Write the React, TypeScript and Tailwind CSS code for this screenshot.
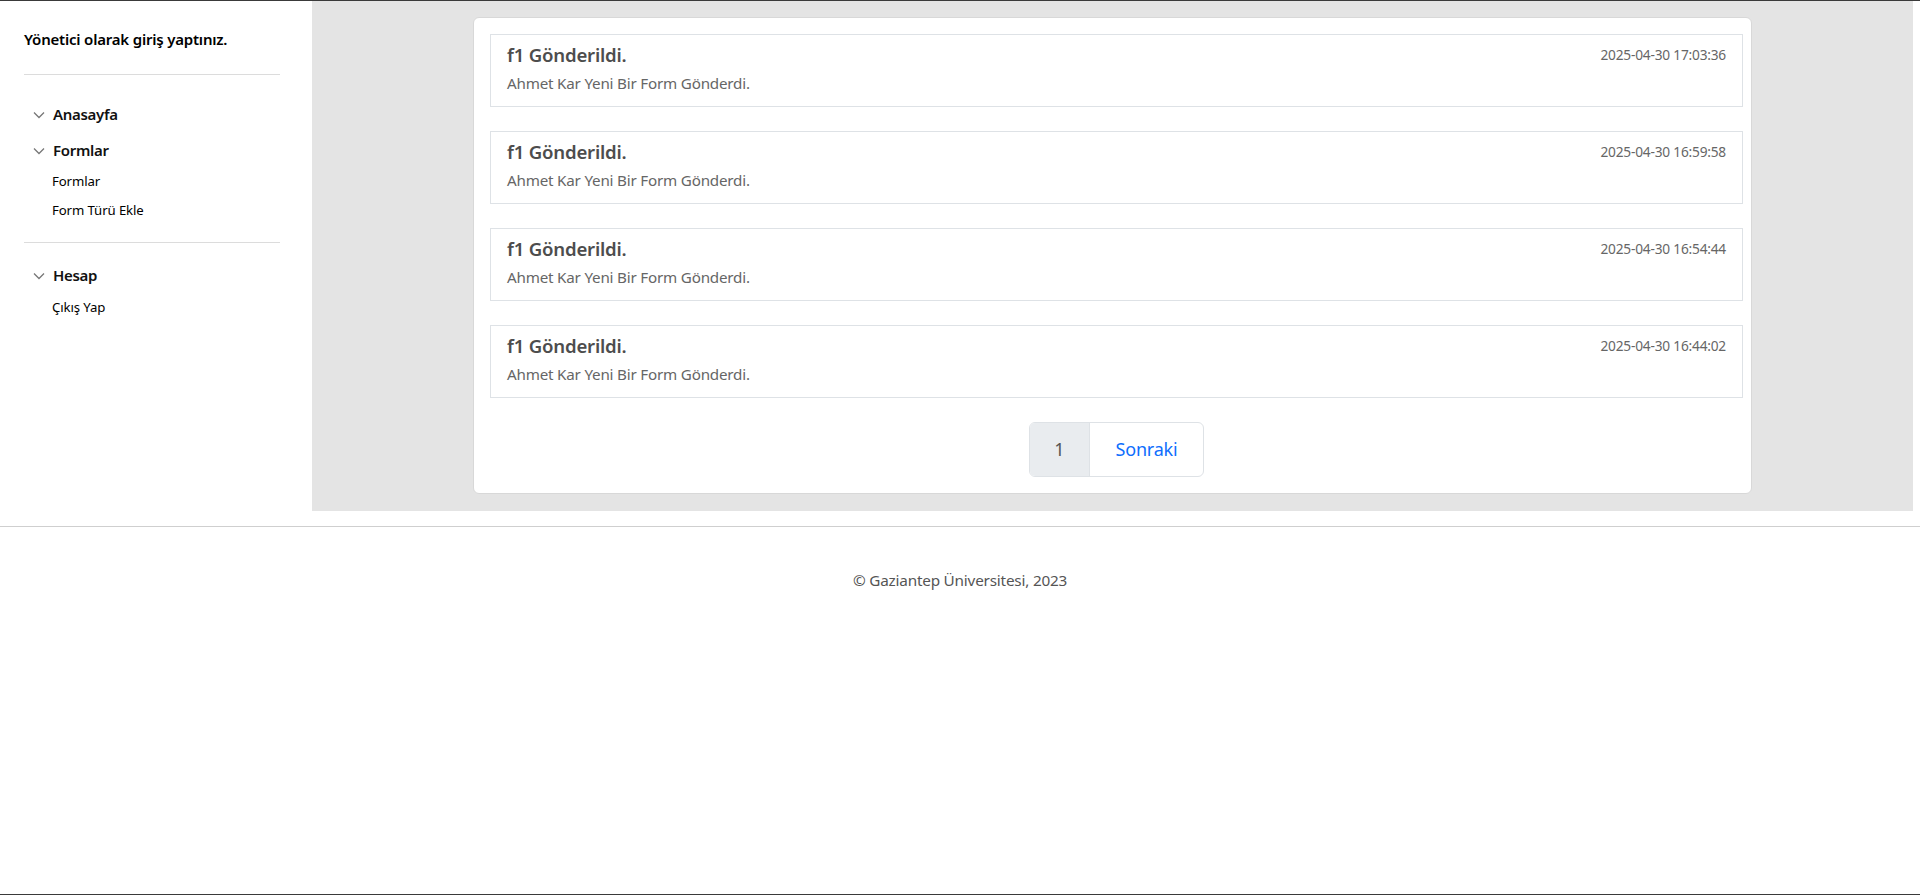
import React from "react";

const items = [
  "2025-04-30 17:03:36",
  "2025-04-30 16:59:58",
  "2025-04-30 16:54:44",
  "2025-04-30 16:44:02",
];

function Chevron() {
  return (
    <svg width="12" height="8" viewBox="0 0 12 8" className="shrink-0">
      <path d="M1 1.5 L6 6.5 L11 1.5" fill="none" stroke="#777" strokeWidth="1.3" />
    </svg>
  );
}

export default function App() {
  return (
    <div
      className="h-[895px] w-full border-t border-b border-[#3a3a3a] bg-white flex flex-col"
      style={{ fontFamily: '"Noto Sans", "Open Sans", sans-serif' }}
    >
      <div className="flex">
        <aside className="w-[312px] shrink-0 px-6 pt-[27px]">
          <div className="text-[15px] font-semibold text-black tracking-[-0.2px]">Yönetici olarak giriş yaptınız.</div>
          <div className="mt-[23px] h-px bg-[#dcdcdc] w-[256px]" />
          <div className="pt-[29px]">
            <div className="flex items-center gap-[8px] pl-[9px] h-[22px]">
              <Chevron />
              <span className="text-[15px] font-semibold text-[#111] tracking-[-0.3px]">Anasayfa</span>
            </div>
            <div className="flex items-center gap-[8px] pl-[9px] h-[22px] mt-[14px]">
              <Chevron />
              <span className="text-[15px] font-semibold text-[#111] tracking-[-0.3px]">Formlar</span>
            </div>
            <div className="pl-[28px] mt-[10px] text-[13.2px] text-black leading-[18px] tracking-[-0.1px]">Formlar</div>
            <div className="pl-[28px] mt-[11px] text-[13.2px] text-black leading-[18px] tracking-[-0.1px]">Form Türü Ekle</div>
          </div>
          <div className="mt-[23px] h-px bg-[#dcdcdc] w-[256px]" />
          <div className="pt-[22px]">
            <div className="flex items-center gap-[8px] pl-[9px] h-[22px]">
              <Chevron />
              <span className="text-[15px] font-semibold text-[#111] tracking-[-0.3px]">Hesap</span>
            </div>
            <div className="pl-[28px] mt-[11px] text-[13.2px] text-black leading-[18px] tracking-[-0.1px]">Çıkış Yap</div>
          </div>
        </aside>
        <main className="w-[1601px] shrink-0 bg-[#e4e4e4] pt-4 pb-[17px] flex justify-center">
          <div className="w-[1279px] bg-white border border-[#d8d8d8] rounded-[6px] pt-4 pl-4 pr-2 pb-4">
            <div className="flex flex-col gap-[24px]">
              {items.map((d) => (
                <div key={d} className="h-[73px] border border-[#dee2e6] flex justify-between px-4 pt-[6px]">
                  <div>
                    <div className="text-[18.6px] font-semibold text-[#4d4d4d] leading-[28px] tracking-[-0.2px]">f1 Gönderildi.</div>
                    <div className="text-[15.2px] text-[#666] leading-[22px] mt-[3px] tracking-[-0.2px]">Ahmet Kar Yeni Bir Form Gönderdi.</div>
                  </div>
                  <div className="text-[13.7px] text-[#666] leading-[20px] pt-[4px] tracking-[-0.2px]">{d}</div>
                </div>
              ))}
            </div>
            <div className="flex justify-center mt-[24px]">
              <div className="flex h-[55px] border border-[#dee2e6] rounded-[6px] overflow-hidden text-[18px]">
                <div className="w-[60px] bg-[#e9ecef] border-r border-[#dee2e6] flex items-center justify-center text-[#555]">1</div>
                <div className="w-[113px] flex items-center justify-center text-[#0d6efd] tracking-[-0.2px]">Sonraki</div>
              </div>
            </div>
          </div>
        </main>
        <div className="flex-1" />
      </div>
      <footer className="mt-[15px] border-t border-[#cfcfcf] pt-[42px] text-center text-[15.3px] text-[#555] tracking-[-0.2px]">
        © Gaziantep Üniversitesi, 2023
      </footer>
    </div>
  );
}
